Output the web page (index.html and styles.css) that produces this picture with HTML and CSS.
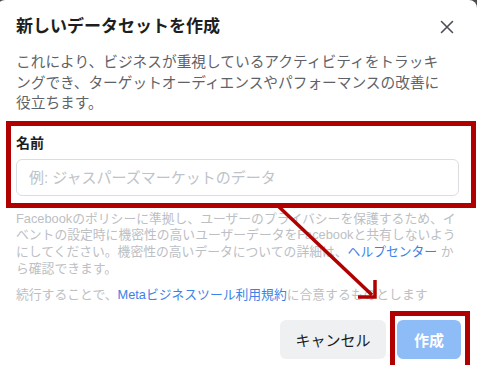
FILE: index.html
```html
<!DOCTYPE html>
<html lang="ja">
<head>
<meta charset="utf-8">
<title>新しいデータセットを作成</title>
<link rel="stylesheet" href="styles.css">
</head>
<body>
<div class="dialog">
  <div class="header">
    <h1 class="title">新しいデータセットを作成</h1>
    <button class="close" aria-label="閉じる">
      <svg width="14" height="14" viewBox="0 0 14 14"><path d="M1.5 1.5 L12.5 12.5 M12.5 1.5 L1.5 12.5" stroke="#4b4f56" stroke-width="1.6" fill="none" stroke-linecap="round"/></svg>
    </button>
  </div>
  <p class="desc">これにより、ビジネスが重視しているアクティビティをトラッキングでき、ターゲットオーディエンスやパフォーマンスの改善に役立ちます。</p>
  <div class="field">
    <label class="label" for="name">名前</label>
    <input id="name" class="input" type="text" placeholder="例: ジャスパーズマーケットのデータ">
  </div>
  <p class="note">Facebookのポリシーに準拠し、ユーザーのプライバシーを保護するため、イ<br>ベントの設定時に機密性の高いユーザーデータをFacebookと共有しないよう<br>にしてください。機密性の高いデータについての詳細は、<a class="link" href="#">ヘルプセンター</a> か<br>ら確認できます。</p>
  <p class="terms">続行することで、<a class="link" href="#">Metaビジネスツール利用規約</a>に合意するものとします</p>
  <div class="footer">
    <button class="btn btn-cancel">キャンセル</button>
    <div class="primary-wrap">
      <button class="btn btn-primary" disabled>作成</button>
      <span class="mark-box"></span>
    </div>
  </div>
</div>
<svg class="arrow" width="477" height="365" viewBox="0 0 477 365">
  <line x1="277" y1="205" x2="372" y2="295" stroke="#b00000" stroke-width="3.5"/>
  <polyline points="358,297 375,297 375,280" fill="none" stroke="#b00000" stroke-width="3.5"/>
</svg>
</body>
</html>
```

FILE: styles.css
```css
html, body {
  margin: 0;
  padding: 0;
  background: #4a4b4d;
  overflow: hidden;
}
body {
  width: 477px;
  height: 365px;
  position: relative;
  font-family: "Liberation Sans", "Noto Sans CJK JP", sans-serif;
}
.dialog {
  margin-left: -3px;
  width: 480px;
  height: 380px;
  box-sizing: border-box;
  background: #fff;
  border-radius: 8px 8px 0 0;
  padding: 16px 16px 0 19px;
}
.header {
  display: flex;
  align-items: center;
  justify-content: space-between;
  height: 22px;
}
.title {
  margin: 0;
  font-size: 17px;
  line-height: 22px;
  font-weight: bold;
  color: #1c1e21;
}
.close {
  width: 28px;
  height: 28px;
  border: 0;
  padding: 0;
  background: transparent;
  display: flex;
  align-items: center;
  justify-content: center;
}
.desc {
  margin: 14px 0 0;
  width: 432px;
  font-size: 14.7px;
  line-height: 20.5px;
  color: #5f6368;
}
.field {
  margin: 7px -15px 0 -10px;
  border: 5px solid #b00000;
  padding: 8px 12px 7px 5px;
  display: flex;
  flex-direction: column;
}
.label {
  font-size: 14px;
  line-height: 18px;
  font-weight: bold;
  color: #1c1e21;
}
.input {
  margin-top: 7px;
  height: 37px;
  box-sizing: border-box;
  border: 1px solid #dadde1;
  border-radius: 6px;
  padding: 0 12px;
  font-family: inherit;
  font-size: 15px;
  color: #1c1e21;
  background: #fff;
}
.input::placeholder {
  color: #bec3c9;
}
.note {
  margin: 3px -4px 0 0;
  font-size: 12.8px;
  line-height: 16.7px;
  color: #bcc0c4;
  white-space: nowrap;
}
.terms {
  margin: 10px 0 0;
  font-size: 12.8px;
  line-height: 16.7px;
  color: #bcc0c4;
}
.link {
  color: #3b82e8;
  text-decoration: none;
}
.footer {
  margin-top: 16px;
  display: flex;
  justify-content: flex-end;
  gap: 11px;
}
.btn {
  height: 39px;
  border: 0;
  border-radius: 6px;
  font-family: inherit;
  font-size: 15px;
  padding: 0;
}
.btn-cancel {
  width: 106px;
  background: #eff0f2;
  color: #1c1e21;
}
.btn-primary {
  width: 64px;
  background: #8dbcf7;
  color: #fff;
  font-weight: bold;
}
.primary-wrap {
  position: relative;
  display: flex;
}
.mark-box {
  position: absolute;
  left: -7px;
  right: -9px;
  top: -9px;
  bottom: -14px;
  border: 5px solid #b00000;
}
.arrow {
  position: absolute;
  left: 0;
  top: 0;
  pointer-events: none;
}
```
